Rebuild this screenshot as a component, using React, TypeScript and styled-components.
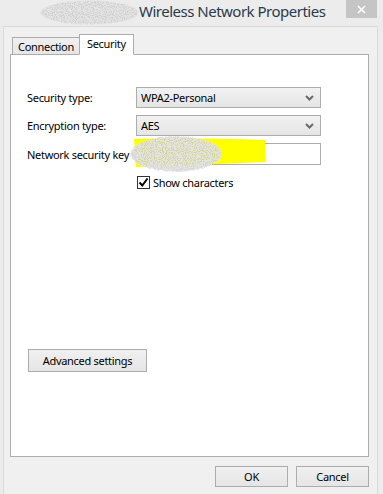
import React from 'react';
import styled, { createGlobalStyle } from 'styled-components';

const GlobalStyle = createGlobalStyle`
  html, body {
    margin: 0;
    padding: 0;
    background: #ececec;
  }
  body {
    font-family: "Noto Sans", "Open Sans", Arial, sans-serif;
    font-size: 11px;
    letter-spacing: -0.3px;
    color: #000;
  }
`;

const Window = styled.div`
  width: 383px;
  height: 494px;
  background: #ececec;
  display: flex;
  flex-direction: column;
  overflow: hidden;
`;

const TitleBar = styled.div`
  height: 26px;
  display: flex;
  align-items: flex-start;
  position: relative;
`;

const TitleGroup = styled.div`
  display: flex;
  align-items: center;
  height: 24px;
  padding-left: 40px;
`;

const TitleText = styled.span`
  font-family: "Noto Sans", "Open Sans", sans-serif;
  font-size: 15px;
  letter-spacing: -0.5px;
  color: #2b3a4c;
  margin-top: -2px;
  white-space: nowrap;
`;

const CloseButton = styled.div`
  position: absolute;
  top: 0;
  right: 6px;
  width: 31px;
  height: 18px;
  background: #c5c5c5;
  display: flex;
  align-items: center;
  justify-content: center;
`;

const Client = styled.div`
  flex: 1;
  margin-left: 3px;
  margin-right: 5px;
  background: #f0f0f0;
  border: 1px solid #dadada;
  border-bottom: none;
  padding: 6px 8px 0 6px;
  display: flex;
  flex-direction: column;
`;

const TabRow = styled.div`
  display: flex;
  align-items: flex-end;
  padding-left: 2px;
  height: 21px;
  position: relative;
  z-index: 1;
`;

const Tab = styled.div<{ $active?: boolean }>`
  height: ${({ $active }) => ($active ? 21 : 17)}px;
  padding: ${({ $active }) => ($active ? '0 7px 2px 7px' : '0 5px')};
  border: 1px solid #acacac;
  border-bottom: ${({ $active }) => ($active ? '1px solid #fff' : 'none')};
  margin-bottom: ${({ $active }) => ($active ? '-1px' : '0')};
  margin-left: ${({ $active }) => ($active ? '-1px' : '0')};
  background: ${({ $active }) => ($active ? '#fff' : 'linear-gradient(#f0f0f0, #e5e5e5)')};
  display: flex;
  align-items: center;
  box-sizing: border-box;
`;

const Panel = styled.div`
  height: 403px;
  box-sizing: border-box;
  background: #fff;
  border: 1px solid #acacac;
  padding: 32px 16px 0 16px;
  position: relative;
  display: flex;
  flex-direction: column;
`;

const FormGrid = styled.div`
  display: grid;
  grid-template-columns: 109px 185px;
  row-gap: 7px;
  align-items: center;
`;

const Label = styled.label`
  white-space: nowrap;
`;

const Select = styled.div`
  height: 21px;
  box-sizing: border-box;
  border: 1px solid #acacac;
  background: linear-gradient(#f2f2f2, #e5e5e5);
  display: flex;
  align-items: center;
  justify-content: space-between;
  padding: 0 6px 0 4px;
`;

const TextInput = styled.div`
  height: 22px;
  box-sizing: border-box;
  border: 1px solid #acacac;
  background: #fff;
`;

const CheckRow = styled.div`
  grid-column: 2;
  display: flex;
  align-items: center;
  gap: 3px;
  margin-top: 3px;
  padding-left: 1px;
`;

const CheckBox = styled.span`
  width: 13px;
  height: 13px;
  box-sizing: border-box;
  border: 1px solid #333;
  background: #fff;
  display: inline-flex;
  align-items: center;
  justify-content: center;
`;

const Button = styled.button<{ $w: number; $h: number }>`
  width: ${({ $w }) => $w}px;
  height: ${({ $h }) => $h}px;
  box-sizing: border-box;
  border: 1px solid #acacac;
  background: linear-gradient(#f0f0f0, #e5e5e5);
  font-family: inherit;
  font-size: 11px;
  letter-spacing: -0.3px;
  color: #000;
  padding: 0;
  cursor: default;
`;

const AdvancedWrap = styled.div`
  margin-top: 159px;
  padding-left: 1px;
`;

const Overlay = styled.svg`
  position: absolute;
  pointer-events: none;
`;

const Footer = styled.div`
  display: flex;
  justify-content: flex-end;
  gap: 8px;
  padding-top: 9px;
`;

const Chevron = () => (
  <svg width="9" height="6" viewBox="0 0 9 6">
    <path d="M1 1 L4.5 4.5 L8 1" fill="none" stroke="#6a6a6a" strokeWidth="2" />
  </svg>
);

// grey stipple used to hide private text in the screenshot
const Stipple: React.FC<{ id: string; w: number; h: number }> = ({ id, w, h }) => (
  <>
    <defs>
      <filter id={id} x="0" y="0" width="100%" height="100%">
        <feTurbulence type="fractalNoise" baseFrequency="0.9" numOctaves="1" seed="3" result="n" />
        <feColorMatrix
          in="n"
          type="matrix"
          values="0 0 0 0 0.76  0 0 0 0 0.76  0 0 0 0 0.76  0 0 0 9 -3.6"
          result="dots"
        />
        <feComposite in="dots" in2="SourceGraphic" operator="in" />
      </filter>
    </defs>
    <ellipse cx={w / 2} cy={h / 2} rx={w / 2 - 1} ry={h / 2 - 1} fill="#c8c8c8" opacity="0.75" />
    <ellipse cx={w / 2} cy={h / 2} rx={w / 2} ry={h / 2} fill="#000" filter={`url(#${id})`} />
  </>
);

const App: React.FC = () => {
  return (
    <>
      <GlobalStyle />
      <Window>
        <TitleBar>
          <TitleGroup>
            <svg width="99" height="25" viewBox="0 0 99 25">
              <Stipple id="titleNoise" w={99} h={25} />
            </svg>
            <TitleText>Wireless Network Properties</TitleText>
          </TitleGroup>
          <CloseButton>
            <svg width="9" height="9" viewBox="0 0 9 9">
              <path d="M1 1 L8 8 M8 1 L1 8" stroke="#fff" strokeWidth="1.6" />
            </svg>
          </CloseButton>
        </TitleBar>
        <Client>
          <TabRow>
            <Tab>Connection</Tab>
            <Tab $active>Security</Tab>
          </TabRow>
          <Panel>
            <FormGrid>
              <Label>Security type:</Label>
              <Select>
                <span>WPA2-Personal</span>
                <Chevron />
              </Select>
              <Label>Encryption type:</Label>
              <Select>
                <span>AES</span>
                <Chevron />
              </Select>
              <Label>Network security key</Label>
              <TextInput />
              <CheckRow>
                <CheckBox>
                  <svg width="11" height="11" viewBox="0 0 11 11">
                    <path d="M1.5 5.5 L4.3 8.5 L9.5 1.5" fill="none" stroke="#000" strokeWidth="2" />
                  </svg>
                </CheckBox>
                <span>Show characters</span>
              </CheckRow>
            </FormGrid>
            <AdvancedWrap>
              <Button $w={119} $h={23}>Advanced settings</Button>
            </AdvancedWrap>
            <Overlay width="140" height="36" viewBox="0 0 140 36" style={{ left: 119, top: 81 }}>
              <path d="M4 3 Q60 1 135 4 L136 26 Q70 29 6 31 Z" fill="#ffff00" />
              <Stipple id="keyNoise" w={92} h={36} />
            </Overlay>
          </Panel>
          <Footer>
            <Button $w={73} $h={21}>OK</Button>
            <Button $w={73} $h={21}>Cancel</Button>
          </Footer>
        </Client>
      </Window>
    </>
  );
};

export default App;
